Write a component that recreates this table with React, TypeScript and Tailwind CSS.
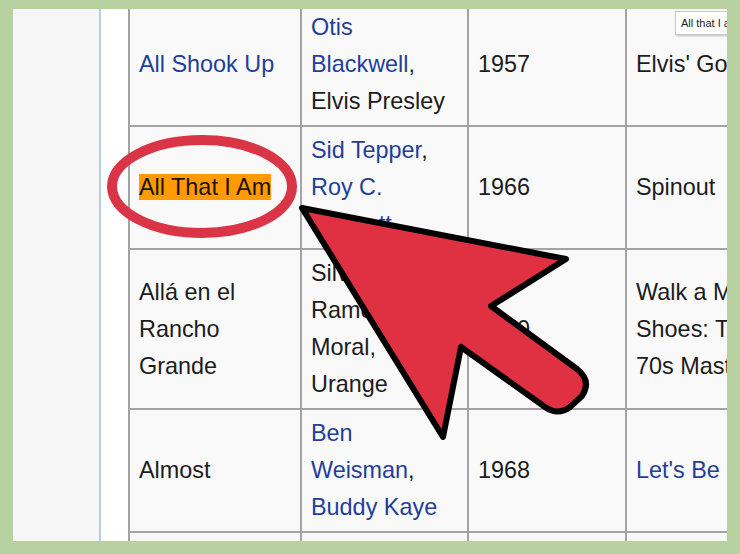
import React from "react";

const BLUE = "text-[#1f3f98]";
const BLACK = "text-[#1c1c1c]";

function Cell({ children, w }: { children?: React.ReactNode; w?: string }) {
  return (
    <div
      className={`flex flex-col justify-center border-l-2 border-b-2 border-[#a3a3a3] bg-[#f9f9f9] pl-[9px] pr-[4px] py-[5px] whitespace-nowrap ${w ?? ""}`}
    >
      {children}
    </div>
  );
}

function L({ children, blue }: { children: React.ReactNode; blue?: boolean }) {
  return <div className={`h-[37px] leading-[37px] ${blue ? BLUE : BLACK}`}>{children}</div>;
}

export default function App() {
  return (
    <div
      className="relative w-[740px] h-[554px] bg-[#b7d1a0] pt-[9px] pl-[13px] pr-[13px] pb-[13px]"
      style={{ fontFamily: '"Liberation Sans", Arial, sans-serif' }}
    >
      <div className="relative h-full w-full overflow-hidden bg-white flex">
        <div className="w-[86px] h-full bg-[#f6f6f6]" />
        <div className="w-[2px] h-full bg-[#b3cde6]" />
        <div className="w-[27px] h-full bg-white" />
        <div className="flex-1 overflow-hidden">
          <div className="-mt-[7px] grid grid-cols-[172px_167px_158px_220px] text-[23.4px] border-t-2 border-[#a3a3a3]">
            {/* Row 1 */}
            <Cell>
              <L blue>All Shook Up</L>
            </Cell>
            <Cell>
              <L blue>Otis</L>
              <L>
                <span className={BLUE}>Blackwell</span>,
              </L>
              <L>Elvis Presley</L>
            </Cell>
            <Cell>
              <L>1957</L>
            </Cell>
            <Cell>
              <L>Elvis' Golden Records</L>
            </Cell>

            {/* Row 2 */}
            <Cell>
              <L>
                <span className="bg-[#ff9a00] text-[#1a1206]">All That I Am</span>
              </L>
            </Cell>
            <Cell>
              <L>
                <span className={BLUE}>Sid Tepper</span>,
              </L>
              <L blue>Roy C.</L>
              <L blue>Bennett</L>
            </Cell>
            <Cell>
              <L>1966</L>
            </Cell>
            <Cell>
              <L>Spinout</L>
            </Cell>

            {/* Row 3 */}
            <Cell>
              <L>Allá en el</L>
              <L>Rancho</L>
              <L>Grande</L>
            </Cell>
            <Cell>
              <L>Silvano</L>
              <L>Ramos, Del</L>
              <L>Moral,</L>
              <L>Urange</L>
            </Cell>
            <Cell>
              <L>1970</L>
            </Cell>
            <Cell>
              <L>Walk a Mile in My</L>
              <L>Shoes: The Essential</L>
              <L>70s Masters</L>
            </Cell>

            {/* Row 4 */}
            <Cell>
              <L>Almost</L>
            </Cell>
            <Cell>
              <L blue>Ben</L>
              <L>
                <span className={BLUE}>Weisman</span>,
              </L>
              <L blue>Buddy Kaye</L>
            </Cell>
            <Cell>
              <L>1968</L>
            </Cell>
            <Cell>
              <L blue>Let's Be Friends</L>
            </Cell>

            {/* Row 5 (only its top edge is visible) */}
            <Cell w="h-[40px]" />
            <Cell w="h-[40px]" />
            <Cell w="h-[40px]" />
            <Cell w="h-[40px]" />
          </div>
        </div>

        {/* tooltip */}
        <div
          className="absolute left-[662px] top-[2px] h-[24px] w-[80px] border border-[#c9c9c9] bg-white shadow-[1px_1px_2px_rgba(0,0,0,0.25)] pl-[5px] text-[11px] leading-[22px] text-[#222] whitespace-nowrap"
          style={{ fontFamily: '"Liberation Sans", "Noto Sans", sans-serif' }}
        >
          All that I am
        </div>
      </div>

      {/* overlay annotations */}
      <svg
        className="absolute left-0 top-0 pointer-events-none"
        width={740}
        height={554}
        viewBox="0 0 740 554"
      >
        <ellipse cx={202} cy={186.5} rx={90} ry={46.5} fill="none" stroke="#da3447" strokeWidth={10} />
        <path
          d="M302 208 L566 259 L491 306 L577 369 Q592 381 582 396 L570 407 Q558 416 545 407 L461 347 L443 437 Z"
          fill="#df3142"
          stroke="#000"
          strokeWidth={6}
          strokeLinejoin="round"
        />
      </svg>
    </div>
  );
}
